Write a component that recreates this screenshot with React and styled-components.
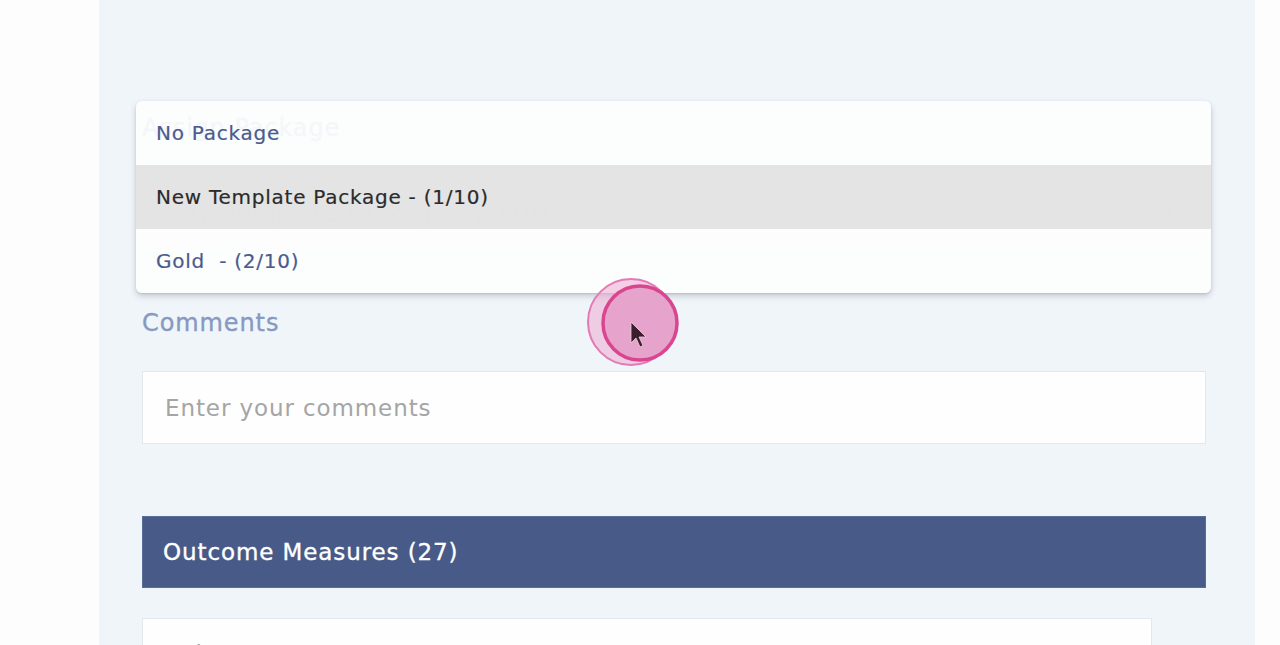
import React from "react";
import styled, { createGlobalStyle } from "styled-components";

const Global = createGlobalStyle`
  html, body { margin: 0; padding: 0; height: 645px; overflow: hidden; background: #fdfdfd; }
  body { font-family: "DejaVu Sans", "Noto Sans", sans-serif; }
  #root { height: 645px; }
`;

const Page = styled.div`
  display: flex;
  height: 645px;
  position: relative;
  overflow: hidden;
`;

const Gutter = styled.div`
  width: ${(p) => p.$w}px;
  flex: none;
  background: #fdfdfd;
`;

const Panel = styled.div`
  flex: 1;
  background: #f0f5fa;
  padding: 113px 49px 0 43px;
  display: flex;
  flex-direction: column;
  & > * { flex: none; }
`;

const Field = styled.div`
  position: relative;
  display: flex;
  flex-direction: column;
  margin-bottom: ${(p) => p.$mb || 0}px;
`;

const Label = styled.div`
  font-size: 24px;
  line-height: 30px;
  letter-spacing: 0.9px;
  -webkit-text-stroke: 0.35px currentColor;
  color: #8799c0;
  margin-bottom: 33px;
  white-space: nowrap;
`;

const Box = styled.div`
  height: 73px;
  box-sizing: border-box;
  background: #fefefe;
  border: 1px solid #e3e8ef;
  display: flex;
  align-items: center;
  padding: 0 22px;
  font-size: 23px;
  letter-spacing: 0.9px;
  color: ${(p) => p.$color || "#a5a5a5"};
  position: relative;
  white-space: nowrap;
`;

const Caret = styled.span`
  position: absolute;
  right: 30px;
  top: 33px;
  width: 0;
  height: 0;
  border-left: 8px solid transparent;
  border-right: 8px solid transparent;
  border-top: 8px solid #777;
`;

const Menu = styled.ul`
  position: absolute;
  left: -6px;
  right: -5px;
  top: -12px;
  margin: 0;
  padding: 0;
  list-style: none;
  border-radius: 6px;
  overflow: hidden;
  background: rgba(253, 253, 253, 0.93);
  box-shadow: 0 3px 6px rgba(40, 50, 70, 0.22), 0 1px 2px rgba(40, 50, 70, 0.12);
  z-index: 5;
`;

const Item = styled.li`
  height: 64px;
  display: flex;
  align-items: center;
  padding-left: 20px;
  font-size: 20px;
  letter-spacing: 0.75px;
  -webkit-text-stroke: 0.2px currentColor;
  white-space: pre;
  color: ${(p) => (p.$active ? "#2b2b2b" : "#4b5b8e")};
  background: ${(p) => (p.$active ? "rgba(224, 224, 224, 0.88)" : "transparent")};
`;

const Header = styled.div`
  height: 72px;
  box-sizing: border-box;
  background: #485a88;
  border: 1px solid #5a6c98;
  display: flex;
  align-items: center;
  padding-left: 20px;
  font-size: 23px;
  letter-spacing: 0.9px;
  -webkit-text-stroke: 0.35px currentColor;
  color: #ffffff;
  margin-bottom: 30px;
  white-space: nowrap;
`;

const TestBox = styled.div`
  width: 1010px;
  height: 80px;
  box-sizing: border-box;
  background: #fefefe;
  border: 1px solid #e3e8ef;
  padding: 20px 22px;
  font-size: 23px;
  letter-spacing: 0.9px;
  line-height: 30px;
  color: #a5a5a5;
`;

const Cursor = styled.div`
  position: absolute;
  left: 584px;
  top: 276px;
  width: 100px;
  height: 95px;
  pointer-events: none;
  z-index: 10;
`;

export default function App() {
  return (
    <>
      <Global />
      <Page>
        <Gutter $w={99} />
        <Panel>
          <Field $mb={59}>
            <Label>Assign Package</Label>
            <Box $color="#555">
              New Template Package - (1/10)
              <Caret />
            </Box>
            <Menu>
              <Item>No Package</Item>
              <Item $active>New Template Package - (1/10)</Item>
              <Item>{"Gold  - (2/10)"}</Item>
            </Menu>
          </Field>
          <Field $mb={72}>
            <Label>Comments</Label>
            <Box>Enter your comments</Box>
          </Field>
          <Header>Outcome Measures (27)</Header>
          <TestBox>Select Test</TestBox>
        </Panel>
        <Gutter $w={25} />
        <Cursor>
          <svg width="100" height="95" viewBox="0 0 100 95">
            <circle cx="47" cy="46" r="43" fill="rgba(236,170,210,0.55)" stroke="#e27ab6" strokeWidth="2" />
            <circle cx="56" cy="47" r="37" fill="#e6a3cb" stroke="#d9468f" strokeWidth="3.5" />
            <path d="M47 46 L47 67 L52 62 L56 71 L59 69.5 L55 61 L62 61 Z" fill="#3a1f2d" stroke="#f3d0e2" strokeWidth="0.8" />
          </svg>
        </Cursor>
      </Page>
    </>
  );
}
